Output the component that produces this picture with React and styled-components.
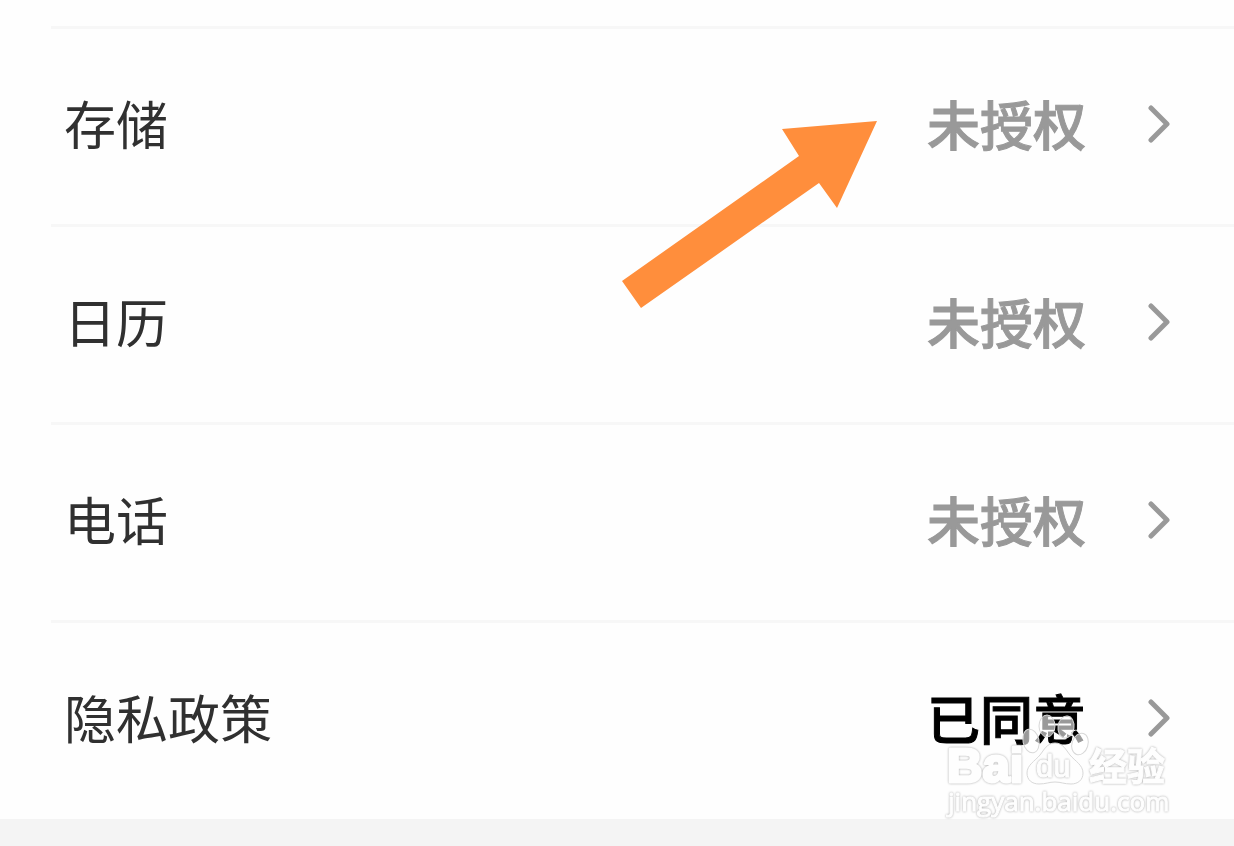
import styled, { createGlobalStyle } from "styled-components";

const GlobalStyle = createGlobalStyle`
    * {
        box-sizing: border-box;
    }

    body {
        margin: 0;
        background-color: #f4f4f4;
        font-family: "Noto Sans CJK SC", "Noto Sans", sans-serif;
    }
`;

const Page = styled.main`
    position: relative;
    overflow: hidden;
    padding-bottom: 27px;
`;

const PermissionList = styled.ul`
    margin: 0;
    padding: 26px 0 1px 51px;
    list-style: none;
    background-color: #fefefe;
`;

const PermissionItem = styled.li`
    position: relative;
    border-top: 3px solid #f7f7f7;
`;

const PermissionButton = styled.button`
    display: flex;
    align-items: center;
    width: 100%;
    padding: 54px 64px 61px 13px;
    border: none;
    background: none;
    font-family: inherit;
    font-size: 52px;
    line-height: 80px;
    text-align: left;
    cursor: pointer;
`;

const Label = styled.span`
    flex: 1;
    color: #303030;
`;

const Status = styled.span`
    margin-right: 62px;
    color: ${(props) => (props.$agreed ? "#000" : "#999")};
    font-size: 53px;
    font-weight: 500;
    -webkit-text-stroke: 1px currentColor;
`;

const Chevron = styled.svg`
    width: 22px;
    height: 40px;
    fill: none;
    stroke: #999;
    stroke-width: 5;
    stroke-linecap: round;
    stroke-linejoin: round;
`;

const Arrow = styled.svg`
    position: absolute;
    top: 92px;
    right: 356px;
    width: 256px;
    height: 188px;
    fill: #ff8e3c;
    z-index: 1;
    pointer-events: none;
`;

const Watermark = styled.svg`
    position: absolute;
    right: 54px;
    bottom: 21px;
    width: 240px;
    height: 115px;
    fill: rgba(255, 255, 255, 0.6);
    stroke: #d8d8d8;
    stroke-width: 1;
    stroke-linejoin: round;
    pointer-events: none;
`;

const WatermarkText = styled.text`
    fill: #fefefe;
    stroke: #fefefe;
    stroke-width: ${(props) => props.$stroke}px;
    filter: drop-shadow(0 0 1px #aaa);
    font-family: ${(props) => props.$family}, sans-serif;
    font-size: ${(props) => props.$size}px;
    font-weight: ${(props) => props.$weight};
`;

const permissions = [
    { name: "存储", status: "未授权", highlighted: true },
    { name: "日历", status: "未授权" },
    { name: "电话", status: "未授权" },
    { name: "隐私政策", status: "已同意", agreed: true },
];

function PointerArrow() {
    return (
        <Arrow viewBox="0 0 256 188" aria-hidden="true">
            <path d="M0 160L177 35L160 8L255 0L215 87L197 62L19 187Z" />
        </Arrow>
    );
}

function BaiduWatermark() {
    return (
        <Watermark viewBox="0 0 240 115" aria-hidden="true">
            <WatermarkText x="7" y="72" $family="Liberation Sans" $size={49} $weight={700} $stroke={3}>
                Bai
            </WatermarkText>
            <ellipse cx="91" cy="31" rx="8" ry="12" transform="rotate(-12 91 31)" />
            <ellipse cx="107" cy="16" rx="8" ry="11" />
            <ellipse cx="126" cy="17" rx="8" ry="11" transform="rotate(8 126 17)" />
            <ellipse cx="140" cy="34" rx="8" ry="11" transform="rotate(18 140 34)" />
            <path
                fill="#fefefe"
                d="M115 33C107 33 104 40 100 45C95 51 87 55 87 63C87 70 92 74 99 74C106 74 109 72 115 72C121 72 124 74 131 74C138 74 143 70 143 63C143 55 135 51 130 45C126 40 123 33 115 33Z"
            />
            <WatermarkText x="96" y="67" $family="Liberation Sans" $size={31} $weight={400} $stroke={1}>
                du
            </WatermarkText>
            <WatermarkText x="149" y="70" $family="Noto Sans CJK SC" $size={38} $weight={700} $stroke={1}>
                经验
            </WatermarkText>
            <WatermarkText x="8" y="101" $family="Open Sans" $size={26} $weight={400} $stroke={1}>
                jingyan.baidu.com
            </WatermarkText>
        </Watermark>
    );
}

function PermissionRow({ permission }) {
    return (
        <PermissionItem>
            <PermissionButton type="button">
                <Label>{permission.name}</Label>
                <Status $agreed={permission.agreed}>{permission.status}</Status>
                <Chevron viewBox="0 0 22 40" aria-hidden="true">
                    <path d="M3 5L19 21L3 37" />
                </Chevron>
            </PermissionButton>
            {permission.highlighted && <PointerArrow />}
        </PermissionItem>
    );
}

function App() {
    return (
        <>
            <GlobalStyle />
            <Page>
                <PermissionList>
                    {permissions.map((permission) => (
                        <PermissionRow key={permission.name} permission={permission} />
                    ))}
                </PermissionList>
                <BaiduWatermark />
            </Page>
        </>
    );
}

export default App;
